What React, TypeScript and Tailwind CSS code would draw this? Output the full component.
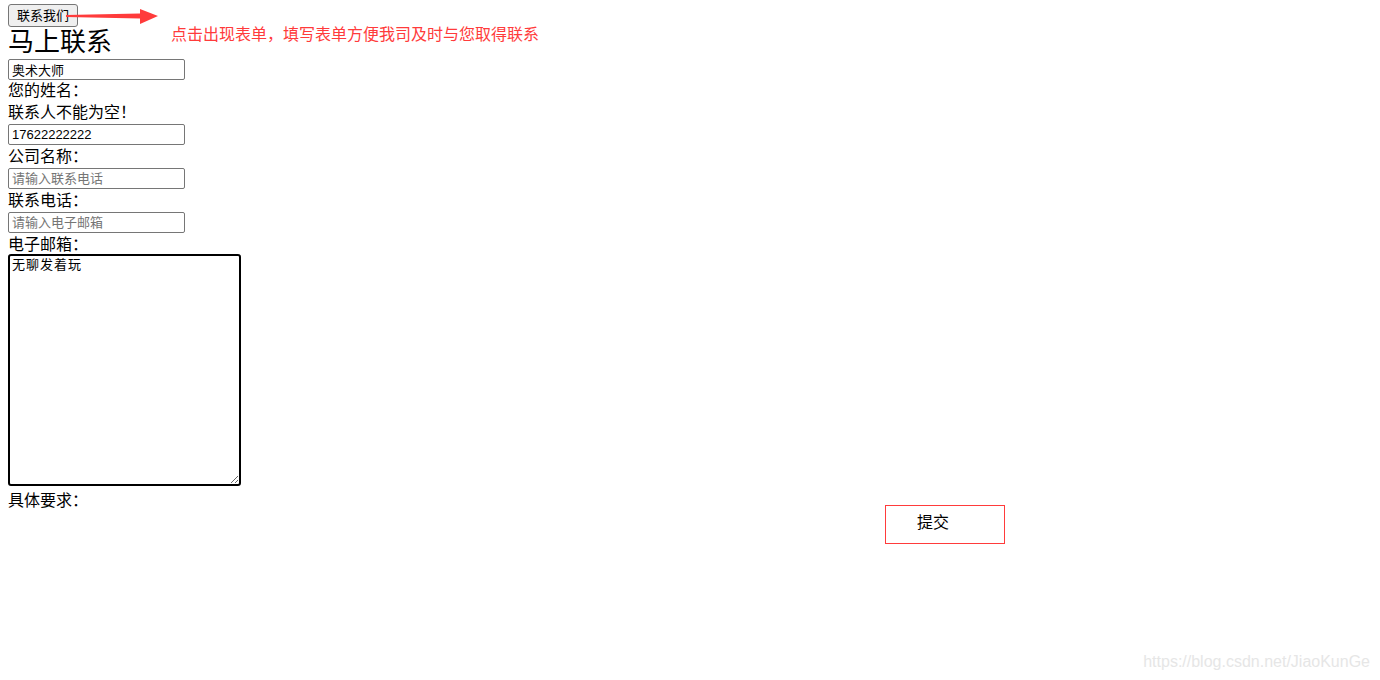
import React from "react";

const font = "font-['Liberation_Sans','Noto_Sans_CJK_SC',sans-serif]";

function Field({ value, placeholder }: { value?: string; placeholder?: string }) {
  return (
    <input
      defaultValue={value}
      placeholder={placeholder}
      className="block h-[21px] w-[177px] rounded-[2px] border border-[#767676] bg-white px-[3px] text-[13px] leading-[19px] text-black outline-none placeholder:text-[#757575]"
    />
  );
}

function Label({ children }: { children: React.ReactNode }) {
  return <div className="text-[16px] leading-[22px] text-black">{children}</div>;
}

export default function App() {
  return (
    <div className={`relative h-[680px] w-[1380px] overflow-hidden bg-white px-2 ${font}`}>
      <button className="mt-[4px] block h-[23px] rounded-[3px] border border-[#767676] bg-[#efefef] px-[8px] text-[13px] leading-[20px] text-black">
        联系我们
      </button>
      <h1 className="text-[26px] leading-[31px] text-black">马上联系</h1>
      <div className="mt-px flex flex-col">
        <Field value="奥术大师" />
        <div>
          <Label>您的姓名：</Label>
          <Label>联系人不能为空！</Label>
        </div>
        <Field value="17622222222" />
        <div className="mt-px">
          <Label>公司名称：</Label>
        </div>
        <Field placeholder="请输入联系电话" />
        <div className="mt-px">
          <Label>联系电话：</Label>
        </div>
        <Field placeholder="请输入电子邮箱" />
        <div className="mt-px">
          <Label>电子邮箱：</Label>
        </div>
        <textarea
          defaultValue="无聊发着玩"
          className="-mt-[2px] block h-[232px] w-[233px] resize rounded-[3px] border-2 border-black px-[2px] py-0 text-[13px] leading-[17px] tracking-[1px] text-black outline-none"
        />
        <div className="mt-[4px] flex items-start">
          <Label>具体要求：</Label>
          <button className="ml-[797px] mt-[15px] h-[39px] w-[120px] border border-[#ff3b3b] bg-white pb-[4px] pl-[31px] text-left text-[16px] leading-[20px] text-black">
            提交
          </button>
        </div>
      </div>

      {/* annotation */}
      <svg className="absolute left-[64px] top-[6px]" width="96" height="20" viewBox="0 0 96 20">
        <polygon points="2,9 76,7.5 76,3 94,10 76,18 76,12.5 2,11" fill="#ff3b3b" />
      </svg>
      <div className="absolute left-[171px] top-[24px] text-[16px] leading-[22px] text-[#ff3b3b]">
        点击出现表单，填写表单方便我司及时与您取得联系
      </div>

      <div className="absolute bottom-[8px] right-[10px] text-[16px] leading-[20px] text-[#e6e6e6]">
        https://blog.csdn.net/JiaoKunGe
      </div>
    </div>
  );
}
